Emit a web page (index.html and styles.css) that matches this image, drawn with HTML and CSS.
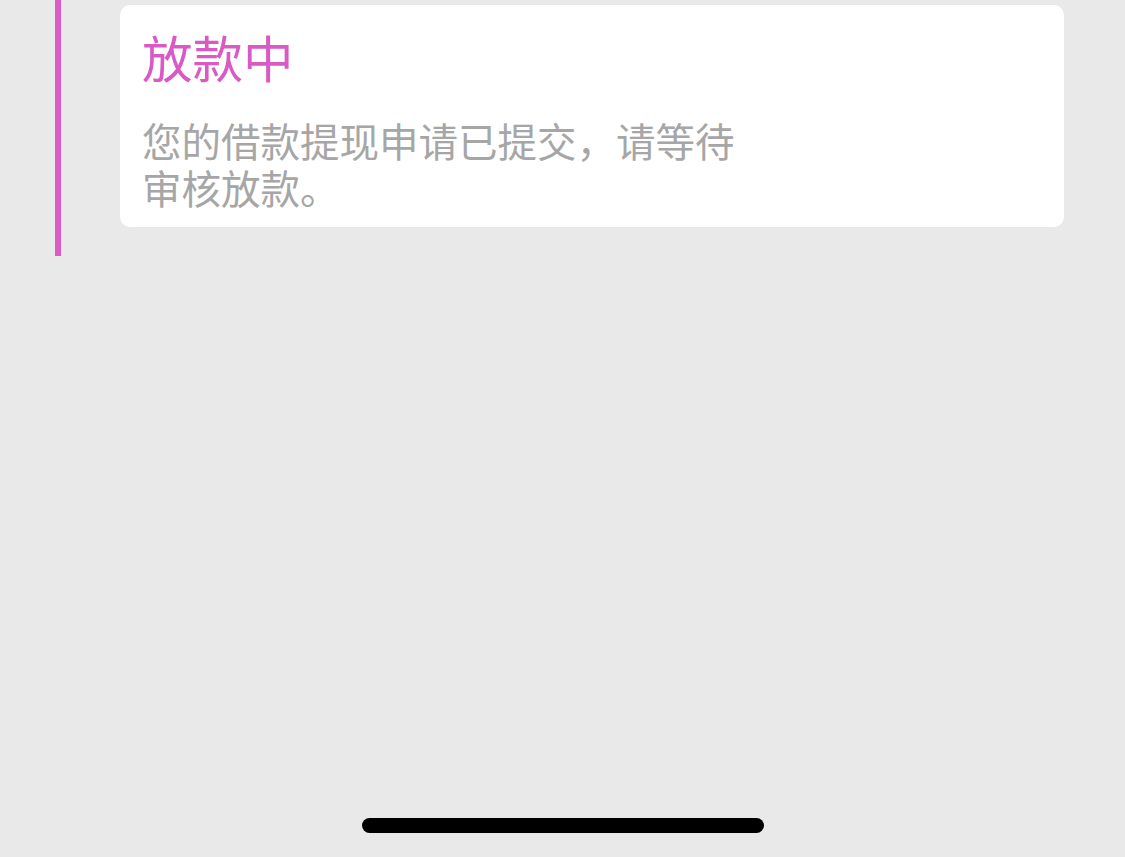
FILE: index.html
```html
<!DOCTYPE html>
<html lang="zh-CN">
<head>
    <meta charset="UTF-8">
    <meta name="viewport" content="width=device-width, initial-scale=1.0">
    <title>放款中</title>
    <link rel="stylesheet" href="styles.css">
</head>
<body>
    <div class="page">
        <div class="timeline">
            <div class="timeline-line"></div>
            <div class="status-card">
                <h2 class="status-title">放款中</h2>
                <p class="status-desc">您的借款提现申请已提交，请等待审核放款。</p>
            </div>
        </div>

        <div class="home-indicator"></div>
    </div>
</body>
</html>
```

FILE: styles.css
```css
/* Loan status page */
html, body {
    margin: 0;
    padding: 0;
}

body {
    font-family: "Noto Sans CJK SC", "Noto Sans", sans-serif;
    background-color: #e9e9e9;
}

.page {
    min-height: 100vh;
    display: flex;
    flex-direction: column;
    box-sizing: border-box;
}

.timeline {
    display: flex;
    align-items: flex-start;
    padding-left: 55px;
    padding-right: 61px;
    gap: 59px;
}

.timeline-line {
    width: 6px;
    height: 256px;
    flex-shrink: 0;
    background-color: #db5cc6;
}

.status-card {
    flex: 1;
    margin-top: 5px;
    background-color: #fff;
    border-radius: 10px;
    padding: 21px 22px 17px;
}

.status-title {
    margin: 0;
    font-size: 50.5px;
    line-height: 60px;
    font-weight: 400;
    color: #d95ac5;
}

.status-desc {
    margin: 30px 0 0;
    max-width: 600px;
    font-size: 39.5px;
    line-height: 47px;
    color: #a6a6a6;
}

.home-indicator {
    margin: auto auto 24px;
    width: 402px;
    height: 15px;
    border-radius: 8px;
    background-color: #000;
}
```
